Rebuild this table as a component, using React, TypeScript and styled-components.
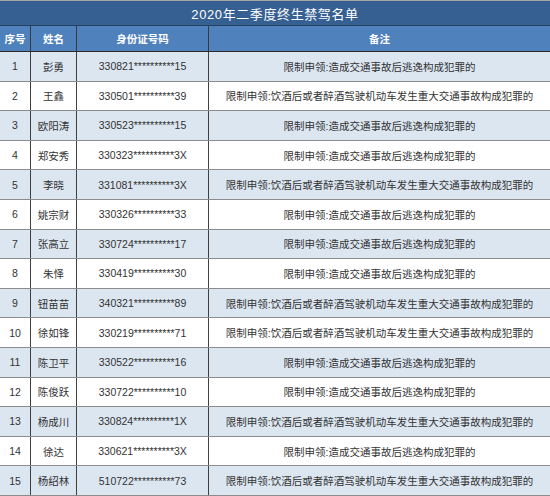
import * as React from 'react'
import styled, {createGlobalStyle} from 'styled-components'

type Entry = {
  name: string
  id: string
  reason: 'escape' | 'drunk'
}

const reasons = {
  escape: '限制申领:造成交通事故后逃逸构成犯罪的',
  drunk: '限制申领:饮酒后或者醉酒驾驶机动车发生重大交通事故构成犯罪的',
}

const stars = '**********'

const entries: Entry[] = [
  {name: '彭勇', id: `330821${stars}15`, reason: 'escape'},
  {name: '王鑫', id: `330501${stars}39`, reason: 'drunk'},
  {name: '欧阳涛', id: `330523${stars}15`, reason: 'escape'},
  {name: '郑安秀', id: `330323${stars}3X`, reason: 'escape'},
  {name: '李晓', id: `331081${stars}3X`, reason: 'drunk'},
  {name: '姚宗财', id: `330326${stars}33`, reason: 'escape'},
  {name: '张高立', id: `330724${stars}17`, reason: 'escape'},
  {name: '朱怿', id: `330419${stars}30`, reason: 'escape'},
  {name: '钮苗苗', id: `340321${stars}89`, reason: 'drunk'},
  {name: '徐如锋', id: `330219${stars}71`, reason: 'drunk'},
  {name: '陈卫平', id: `330522${stars}16`, reason: 'escape'},
  {name: '陈俊跃', id: `330722${stars}10`, reason: 'escape'},
  {name: '杨成川', id: `330824${stars}1X`, reason: 'drunk'},
  {name: '徐达', id: `330621${stars}3X`, reason: 'escape'},
  {name: '杨绍林', id: `510722${stars}73`, reason: 'drunk'},
]

export default function App () {
  return (
    <>
      <GlobalStyle/>
      <Sheet>
        <Title>2020年二季度终生禁驾名单</Title>
        <HeaderRow>
          <HeadCell>序号</HeadCell>
          <HeadCell>姓名</HeadCell>
          <HeadCell>身份证号码</HeadCell>
          <HeadCell last>备注</HeadCell>
        </HeaderRow>
        {entries.map((e, i) => (
          <Row key={e.id + i} striped={i % 2 === 0}>
            <Cell>{i + 1}</Cell>
            <Cell>{e.name}</Cell>
            <Cell>{e.id}</Cell>
            <Cell last>{reasons[e.reason]}</Cell>
          </Row>
        ))}
      </Sheet>
    </>
  )
}

const GlobalStyle = createGlobalStyle`
  html, body {
    margin: 0;
    padding: 0;
    background: #ffffff;
  }
  body {
    font-family: 'Liberation Sans', 'Noto Sans CJK SC', sans-serif;
  }
`

const Sheet = styled.div`
  width: 550px;
  height: 496px;
  overflow: hidden;
`

const Title = styled.div`
  box-sizing: border-box;
  height: 26px;
  border-top: 1px solid #a6a6a6;
  border-bottom: 1px solid #243f60;
  background: #366092;
  color: #ffffff;
  font-family: 'Liberation Sans', 'Noto Sans CJK SC', sans-serif;
  font-size: 13px;
  letter-spacing: 0.6px;
  display: flex;
  align-items: center;
  justify-content: center;
`

const columns = '31px 46px 132px 1fr'

const HeaderRow = styled.div`
  box-sizing: border-box;
  display: grid;
  grid-template-columns: ${columns};
  height: 26px;
  background: #4f81bd;
  border-bottom: 1px solid #2b2b2b;
`

const HeadCell = styled.div<{last?: boolean}>`
  display: flex;
  align-items: center;
  justify-content: center;
  color: #ffffff;
  font-weight: bold;
  font-size: 10.5px;
  border-right: ${p => p.last ? 'none' : '1px solid #3a3a3a'};
`

const Row = styled.div<{striped: boolean}>`
  box-sizing: border-box;
  display: grid;
  grid-template-columns: ${columns};
  height: 29.6px;
  background: ${p => p.striped ? '#dce6f1' : '#ffffff'};
  border-bottom: 1px solid #8c8c8c;
`

const Cell = styled.div<{last?: boolean}>`
  display: flex;
  align-items: center;
  justify-content: center;
  white-space: nowrap;
  color: #333333;
  font-size: 10.5px;
  border-right: ${p => p.last ? 'none' : '1px solid #404040'};
`
